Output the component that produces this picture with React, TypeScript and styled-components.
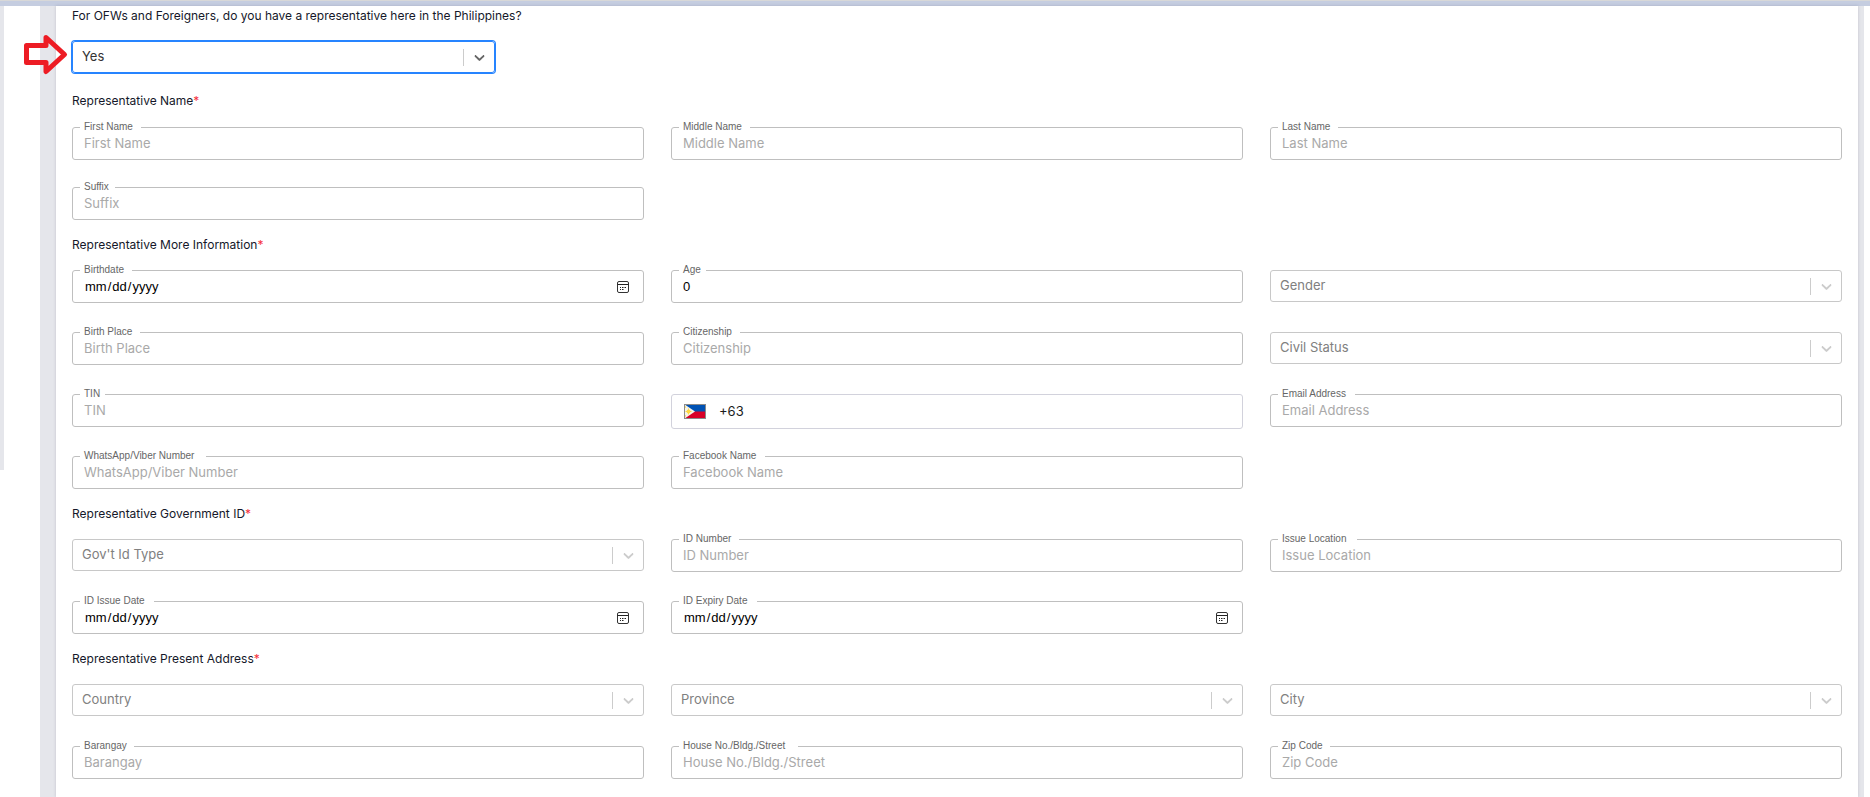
import React, { useId } from "react";
import styled, { createGlobalStyle, css } from "styled-components";

const GlobalStyle = createGlobalStyle`
  * { box-sizing: border-box; }
  body {
    margin: 0;
    background: #fff;
    font-family: Inter, "Liberation Sans", sans-serif;
    color: #15182a;
  }
`;

const Page = styled.div`
  display: flex;
  flex-direction: column;
  min-height: 100vh;
`;

const TopBar = styled.div`
  height: 6px;
  flex: none;
  border-top: 1px solid #d8d8d8;
  background: #c5cde0;
`;

const Body = styled.div`
  display: flex;
  flex: 1;
`;

const Rail = styled.div`
  width: 4px;
  height: 464px;
  margin-right: 36px;
  flex: none;
  background: #e5e6eb;
`;

const Backdrop = styled.main`
  flex: 1;
  display: flex;
  padding: 0 6px 0 16px;
  margin-right: 6px;
  background: #e5e6eb;
`;

const Card = styled.form`
  flex: 1;
  padding: 1px 16px 16px;
  background: #fff;
  box-shadow: 0 0 3px rgba(60, 60, 90, 0.2);
`;

const headingText = css`
  font-size: 12px;
  line-height: 18px;
  font-weight: 400;
`;

const Question = styled.label`
  ${headingText}
  display: block;
  margin-bottom: 16px;
`;

const AnswerRow = styled.div`
  position: relative;
  width: 423px;
  max-width: 100%;
`;

const ArrowMark = styled.svg`
  position: absolute;
  left: -50px;
  top: -8px;
  width: 48px;
  height: 44px;
`;

const Heading = styled.h2<{ $first?: boolean }>`
  ${headingText}
  margin: ${(p) => (p.$first ? "19px 0 17px" : "16px 0")};
`;

const Required = styled.span`
  color: #f5303c;
`;

const FieldGrid = styled.div<{ $gap: number }>`
  display: grid;
  grid-template-columns: repeat(3, minmax(0, 1fr));
  grid-auto-rows: 33px;
  align-items: start;
  column-gap: 27px;
  row-gap: ${(p) => p.$gap}px;
`;

const Outline = styled.div`
  position: relative;
  display: flex;
  align-items: center;
  height: 33px;
  border: 1px solid #bfbfbf;
  border-radius: 3px;
`;

const FloatingLabel = styled.label<{ $chars: number }>`
  position: absolute;
  left: 7px;
  top: -7px;
  padding-left: 4px;
  padding-right: ${(p) => Math.round(4 + p.$chars * 0.4)}px;
  background: #fff;
  font-family: "Liberation Sans", sans-serif;
  font-size: 10px;
  line-height: 12px;
  color: #666;
  white-space: nowrap;
`;

const TextInput = styled.input`
  flex: 1;
  min-width: 0;
  height: 100%;
  padding: 0 11px 2px;
  border: 0;
  outline: 0;
  background: transparent;
  font-family: Inter, "Liberation Sans", sans-serif;
  font-size: 13px;
  color: #1c1c1c;
  &[type="date"],
  &[type="number"] {
    padding-bottom: 0;
    font-family: "Liberation Sans", sans-serif;
    color: #000;
  }
  &[type="number"] {
    appearance: textfield;
  }
  &::placeholder {
    color: #a9a9a9;
    opacity: 1;
  }
  &::-webkit-calendar-picker-indicator {
    opacity: 0;
    width: 14px;
    margin: 0;
  }
`;

const CalendarIcon = styled.svg`
  position: absolute;
  right: 13px;
  top: 9px;
  width: 14px;
  height: 14px;
  pointer-events: none;
`;

const SelectBox = styled.div<{ $active?: boolean }>`
  position: relative;
  height: 32px;
  border: 1px solid ${(p) => (p.$active ? "#2684ff" : "#c8c8c8")};
  border-radius: 3px;
  box-shadow: ${(p) => (p.$active ? "0 0 0 1px #2684ff" : "none")};
`;

const NativeSelect = styled.select<{ $active?: boolean }>`
  appearance: none;
  display: block;
  width: 100%;
  height: 100%;
  padding: 0 40px 2px 9px;
  border: 0;
  outline: 0;
  background: transparent;
  font-family: Inter, "Liberation Sans", sans-serif;
  font-size: 13px;
  color: ${(p) => (p.$active ? "#333" : "#808080")};
`;

const Indicator = styled.div<{ $active?: boolean }>`
  position: absolute;
  right: 0;
  top: 7px;
  display: flex;
  align-items: center;
  justify-content: center;
  width: 31px;
  height: 17px;
  border-left: 1px solid #ccc;
  color: ${(p) => (p.$active ? "#666" : "#ccc")};
  pointer-events: none;
`;

const PhoneBox = styled(Outline)`
  height: 35px;
  border-color: #d2d2dc;
`;

const FlagButton = styled.button`
  display: flex;
  padding: 0 2px 0 12px;
  border: 0;
  background: transparent;
`;

function Field({ label, type = "text", value }: { label: string; type?: string; value?: string }) {
  const id = useId();
  return (
    <Outline>
      <FloatingLabel htmlFor={id} $chars={label.length}>{label}</FloatingLabel>
      <TextInput id={id} type={type} placeholder={label} defaultValue={value} />
      {type === "date" && (
        <CalendarIcon viewBox="0 0 14 14" fill="none" stroke="#333">
          <rect x="1.5" y="1.5" width="11" height="11" rx="1.5" />
          <path d="M1.5 4.5h11" stroke="#222" />
          <path d="M6 7.5h1.500M8.500 7.500h1.500M4 7.500h1M4 9.500h1M6 9.500h1.500" stroke="#222" />
        </CalendarIcon>
      )}
    </Outline>
  );
}

function Select({ label, id, active }: { label: string; id?: string; active?: boolean }) {
  return (
    <SelectBox $active={active}>
      <NativeSelect id={id} aria-label={id ? undefined : label} $active={active}>
        <option>{label}</option>
      </NativeSelect>
      <Indicator $active={active}>
        <svg width="17" height="17" viewBox="0 0 20 20" fill="currentColor">
          <path d="M4.516 7.548c0.436-0.446 1.043-0.481 1.576 0l3.908 3.747 3.908-3.747c0.533-0.481 1.141-0.446 1.574 0 0.436 0.445 0.408 1.197 0 1.615-0.406 0.418-4.695 4.502-4.695 4.502-0.217 0.223-0.502 0.335-0.787 0.335s-0.57-0.112-0.789-0.335c0 0-4.287-4.084-4.695-4.502s-0.436-1.17 0-1.615z" />
        </svg>
      </Indicator>
    </SelectBox>
  );
}

function PhoneField() {
  return (
    <PhoneBox>
      <FlagButton type="button" aria-label="Country code">
        <svg width="22" height="15" viewBox="0 0 22 15">
          <rect width="22" height="8" fill="#0052b4" />
          <rect y="7.5" width="22" height="7.5" fill="#d80027" />
          <path d="M0 0L11 7.5L0 15z" fill="#f5f3ea" />
          <circle cx="4.5" cy="7.5" r="2" fill="#ffda44" />
          <path d="M4.5 4.5v6M1.5 7.5h6M1.4 2.4v1.4M1.4 11.2v1.4" stroke="#ffda44" />
          <rect x="0.5" y="0.5" width="21" height="14" fill="none" stroke="#8a8a8a" />
        </svg>
      </FlagButton>
      <TextInput type="tel" aria-label="Mobile number" defaultValue="+63" />
    </PhoneBox>
  );
}

function SectionHeading({ children, first }: { children: string; first?: boolean }) {
  return (
    <Heading $first={first}>
      {children}
      <Required>*</Required>
    </Heading>
  );
}

export default function App() {
  return (
    <Page>
      <GlobalStyle />
      <TopBar />
      <Body>
        <Rail />
        <Backdrop>
          <Card>
            <Question htmlFor="has-representative">
              For OFWs and Foreigners, do you have a representative here in the Philippines?
            </Question>
            <AnswerRow>
              <Select id="has-representative" label="Yes" active />
              <ArrowMark viewBox="0 0 48 44" fill="none" stroke="#ed1c24" strokeWidth="5" strokeLinejoin="round">
                <path d="M4.5 12.5H24V4.500L42.500 21.500L24 38.500V29.500H4.500Z" />
              </ArrowMark>
            </AnswerRow>

            <SectionHeading first>Representative Name</SectionHeading>
            <FieldGrid $gap={27}>
              <Field label="First Name" />
              <Field label="Middle Name" />
              <Field label="Last Name" />
              <Field label="Suffix" />
            </FieldGrid>

            <SectionHeading>Representative More Information</SectionHeading>
            <FieldGrid $gap={29}>
              <Field label="Birthdate" type="date" />
              <Field label="Age" type="number" value="0" />
              <Select label="Gender" />
              <Field label="Birth Place" />
              <Field label="Citizenship" />
              <Select label="Civil Status" />
              <Field label="TIN" />
              <PhoneField />
              <Field label="Email Address" type="email" />
              <Field label="WhatsApp/Viber Number" />
              <Field label="Facebook Name" />
            </FieldGrid>

            <SectionHeading>Representative Government ID</SectionHeading>
            <FieldGrid $gap={29}>
              <Select label="Gov't Id Type" />
              <Field label="ID Number" />
              <Field label="Issue Location" />
              <Field label="ID Issue Date" type="date" />
              <Field label="ID Expiry Date" type="date" />
            </FieldGrid>

            <SectionHeading>Representative Present Address</SectionHeading>
            <FieldGrid $gap={29}>
              <Select label="Country" />
              <Select label="Province" />
              <Select label="City" />
              <Field label="Barangay" />
              <Field label="House No./Bldg./Street" />
              <Field label="Zip Code" />
            </FieldGrid>
          </Card>
        </Backdrop>
      </Body>
    </Page>
  );
}
